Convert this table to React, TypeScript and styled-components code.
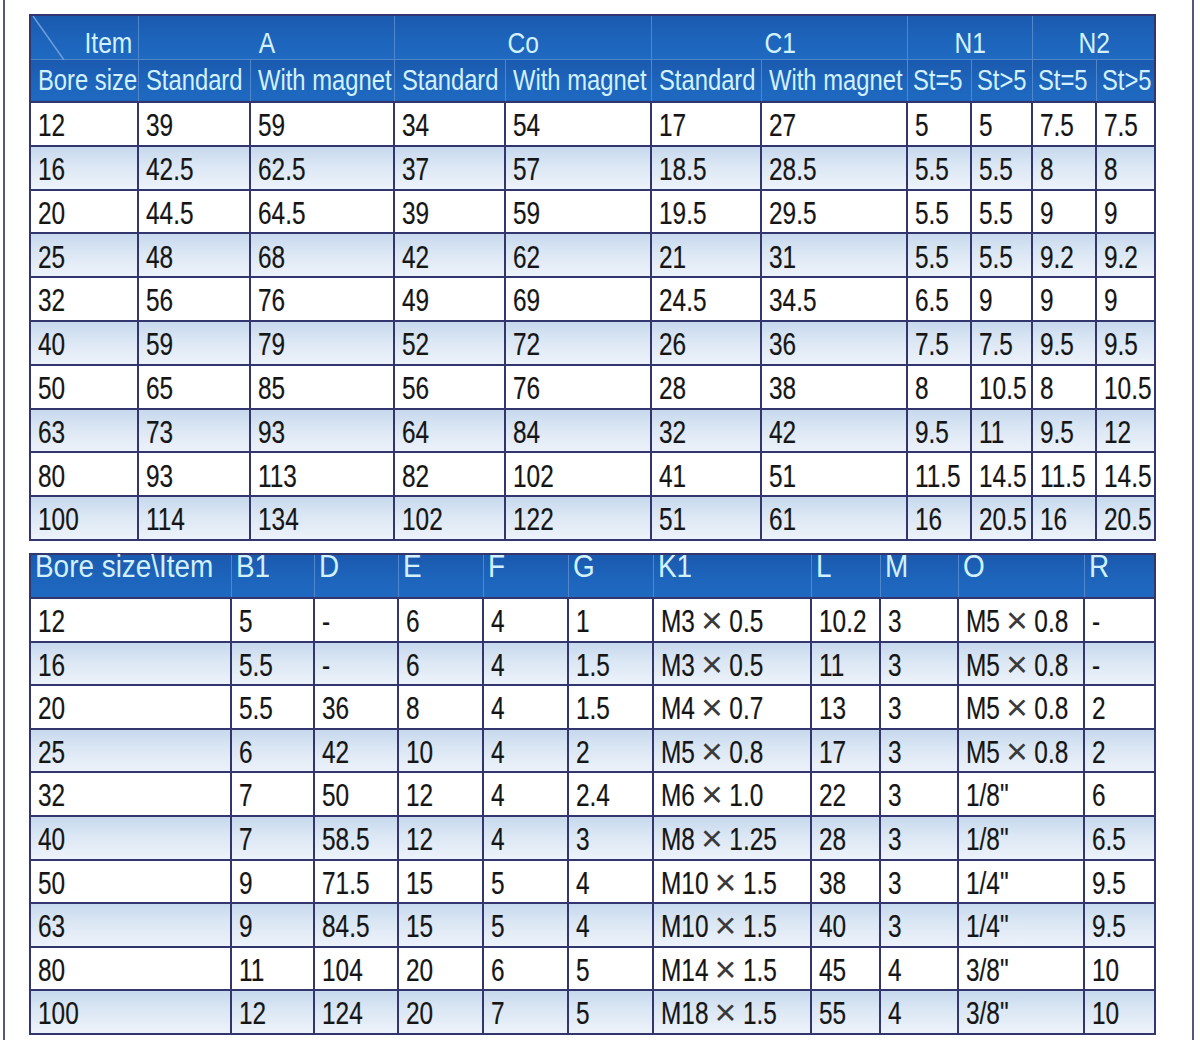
import React from 'react'
import styled, { createGlobalStyle } from 'styled-components'

const GlobalStyle = createGlobalStyle`
  html, body {
    margin: 0;
    padding: 0;
    background: #ffffff;
  }
  body {
    font-family: 'Liberation Sans', Arial, sans-serif;
  }
`

const NAVY = '#33356f'
const HEAD_LINE = '#4f86cc'
const HEAD_TEXT = '#d2f1ff'

const Page = styled.div`
  width: 1200px;
  height: 1040px;
  overflow: hidden;
`

const Frame = styled.div`
  margin-left: 3px;
  width: 1191px;
  height: 1040px;
  box-sizing: border-box;
  border-left: 2px solid #55587c;
  border-right: 2px solid #55587c;
  padding: 14px 0 0 24px;
  display: flex;
  flex-direction: column;
  gap: 12px;
`

const Table = styled.table`
  width: 1125px;
  table-layout: fixed;
  border-collapse: collapse;
  border: 2px solid ${NAVY};
`

const HeadCell = styled.th<{ $align?: 'left' | 'center' | 'right'; $valign?: 'top' | 'middle' | 'bottom'; $h: number }>`
  position: relative;
  height: ${({ $h }) => $h}px;
  padding: ${({ $valign }) => ($valign === 'bottom' ? '0 5px 1px 7px' : '0 5px 0 7px')};
  box-sizing: border-box;
  background: linear-gradient(180deg, #1a5aae 0%, #1d64bb 55%, #1f69c1 100%);
  border: 1px solid ${HEAD_LINE};
  border-bottom: 2px solid ${NAVY};
  color: ${HEAD_TEXT};
  font-weight: normal;
  font-size: 29px;
  line-height: 1;
  text-align: ${({ $align }) => $align ?? 'left'};
  vertical-align: ${({ $valign }) => $valign ?? 'middle'};
  white-space: nowrap;
  overflow: visible;
`

const TopHeadCell = styled(HeadCell)`
  border-bottom: 1px solid ${HEAD_LINE};
  border-top: 2px solid ${NAVY};
  font-size: 30px;
`

const FittingHeadCell = styled(HeadCell)`
  border-top: 2px solid ${NAVY};
  font-size: 31px;
  line-height: 0.8;
  padding: 0 5px 0 4px;
`

const Label = styled.span<{ $origin?: string; $scale?: number }>`
  display: inline-block;
  transform: scaleX(${({ $scale }) => $scale ?? 0.82});
  transform-origin: ${({ $origin }) => $origin ?? 'left'} center;
  white-space: nowrap;
`

const Cross = styled.span`
  display: inline-block;
  margin: 0 11px;
  font-size: 36px;
  line-height: 0.7;
  vertical-align: baseline;
  color: #3a3a3a;
  -webkit-text-stroke: 0;
  transform: scaleX(1.3) translateY(1px);
`

const Row = styled.tr<{ $shade: boolean }>`
  background: ${({ $shade }) =>
    $shade
      ? 'linear-gradient(180deg, #c6d8ed 0%, #dbe7f4 45%, #eef3fa 100%)'
      : '#ffffff'};
`

const Cell = styled.td<{ $h: number }>`
  height: ${({ $h }) => $h}px;
  box-sizing: border-box;
  padding: 3px 4px 0 7px;
  border: 2px solid ${NAVY};
  color: #151515;
  font-size: 30.5px;
  line-height: 1;
  vertical-align: middle;
  white-space: nowrap;
  overflow: visible;
  -webkit-text-stroke: 0.2px #151515;
`

const Diagonal = styled.svg`
  position: absolute;
  left: 0;
  top: 0;
  width: 40px;
  height: 44px;
  pointer-events: none;
`

const cols1 = [108, 112, 144, 111, 146, 110, 146, 64, 61, 64, 59]
const cols2 = [201, 83, 84, 85, 85, 85, 158, 69, 78, 126, 71]

const rows1: string[][] = [
  ['12', '39', '59', '34', '54', '17', '27', '5', '5', '7.5', '7.5'],
  ['16', '42.5', '62.5', '37', '57', '18.5', '28.5', '5.5', '5.5', '8', '8'],
  ['20', '44.5', '64.5', '39', '59', '19.5', '29.5', '5.5', '5.5', '9', '9'],
  ['25', '48', '68', '42', '62', '21', '31', '5.5', '5.5', '9.2', '9.2'],
  ['32', '56', '76', '49', '69', '24.5', '34.5', '6.5', '9', '9', '9'],
  ['40', '59', '79', '52', '72', '26', '36', '7.5', '7.5', '9.5', '9.5'],
  ['50', '65', '85', '56', '76', '28', '38', '8', '10.5', '8', '10.5'],
  ['63', '73', '93', '64', '84', '32', '42', '9.5', '11', '9.5', '12'],
  ['80', '93', '113', '82', '102', '41', '51', '11.5', '14.5', '11.5', '14.5'],
  ['100', '114', '134', '102', '122', '51', '61', '16', '20.5', '16', '20.5'],
]

const rows2: string[][] = [
  ['12', '5', '-', '6', '4', '1', 'M3×0.5', '10.2', '3', 'M5×0.8', '-'],
  ['16', '5.5', '-', '6', '4', '1.5', 'M3×0.5', '11', '3', 'M5×0.8', '-'],
  ['20', '5.5', '36', '8', '4', '1.5', 'M4×0.7', '13', '3', 'M5×0.8', '2'],
  ['25', '6', '42', '10', '4', '2', 'M5×0.8', '17', '3', 'M5×0.8', '2'],
  ['32', '7', '50', '12', '4', '2.4', 'M6×1.0', '22', '3', '1/8"', '6'],
  ['40', '7', '58.5', '12', '4', '3', 'M8×1.25', '28', '3', '1/8"', '6.5'],
  ['50', '9', '71.5', '15', '5', '4', 'M10×1.5', '38', '3', '1/4"', '9.5'],
  ['63', '9', '84.5', '15', '5', '4', 'M10×1.5', '40', '3', '1/4"', '9.5'],
  ['80', '11', '104', '20', '6', '5', 'M14×1.5', '45', '4', '3/8"', '10'],
  ['100', '12', '124', '20', '7', '5', 'M18×1.5', '55', '4', '3/8"', '10'],
]

const groups = ['A', 'Co', 'C1', 'N1', 'N2']
const sub1 = ['Bore size', 'Standard', 'With magnet', 'Standard', 'With magnet', 'Standard', 'With magnet', 'St=5', 'St>5', 'St=5', 'St>5']
const head2 = ['Bore size\\Item', 'B1', 'D', 'E', 'F', 'G', 'K1', 'L', 'M', 'O', 'R']

function Value({ text }: { text: string }) {
  const parts = text.split('×')
  if (parts.length === 2) {
    return (
      <Label $scale={0.8}>
        {parts[0]}
        <Cross>×</Cross>
        {parts[1]}
      </Label>
    )
  }
  return <Label $scale={0.8}>{text}</Label>
}

function DimensionTable() {
  return (
    <Table>
      <colgroup>
        {cols1.map((w, i) => (
          <col key={i} style={{ width: w }} />
        ))}
      </colgroup>
      <thead>
        <tr>
          <TopHeadCell $h={44} $align="right" $valign="bottom">
            <Diagonal viewBox="0 0 40 44">
              <line x1="2" y1="0" x2="33" y2="44" stroke="#6f9ddb" strokeWidth="1.5" />
            </Diagonal>
            <Label $origin="right">Item</Label>
          </TopHeadCell>
          {groups.map((g) => (
            <TopHeadCell key={g} colSpan={2} $h={44} $align="center" $valign="bottom">
              <Label $origin="center">{g}</Label>
            </TopHeadCell>
          ))}
        </tr>
        <tr>
          {sub1.map((s, i) => (
            <HeadCell key={i} $h={43} style={{ paddingLeft: i >= 7 ? 5 : 7 }}>
              <Label>{s}</Label>
            </HeadCell>
          ))}
        </tr>
      </thead>
      <tbody>
        {rows1.map((r, ri) => (
          <Row key={ri} $shade={ri % 2 === 1}>
            {r.map((v, ci) => (
              <Cell key={ci} $h={43.8}>
                <Value text={v} />
              </Cell>
            ))}
          </Row>
        ))}
      </tbody>
    </Table>
  )
}

function FittingTable() {
  return (
    <Table>
      <colgroup>
        {cols2.map((w, i) => (
          <col key={i} style={{ width: w }} />
        ))}
      </colgroup>
      <thead>
        <tr>
          {head2.map((h, i) => (
            <FittingHeadCell key={i} $h={44} $valign="top">
              <Label $scale={0.9}>{h}</Label>
            </FittingHeadCell>
          ))}
        </tr>
      </thead>
      <tbody>
        {rows2.map((r, ri) => (
          <Row key={ri} $shade={ri % 2 === 1}>
            {r.map((v, ci) => (
              <Cell key={ci} $h={43.6}>
                <Value text={v} />
              </Cell>
            ))}
          </Row>
        ))}
      </tbody>
    </Table>
  )
}

export default function App() {
  return (
    <>
      <GlobalStyle />
      <Page>
        <Frame>
          <DimensionTable />
          <FittingTable />
        </Frame>
      </Page>
    </>
  )
}
